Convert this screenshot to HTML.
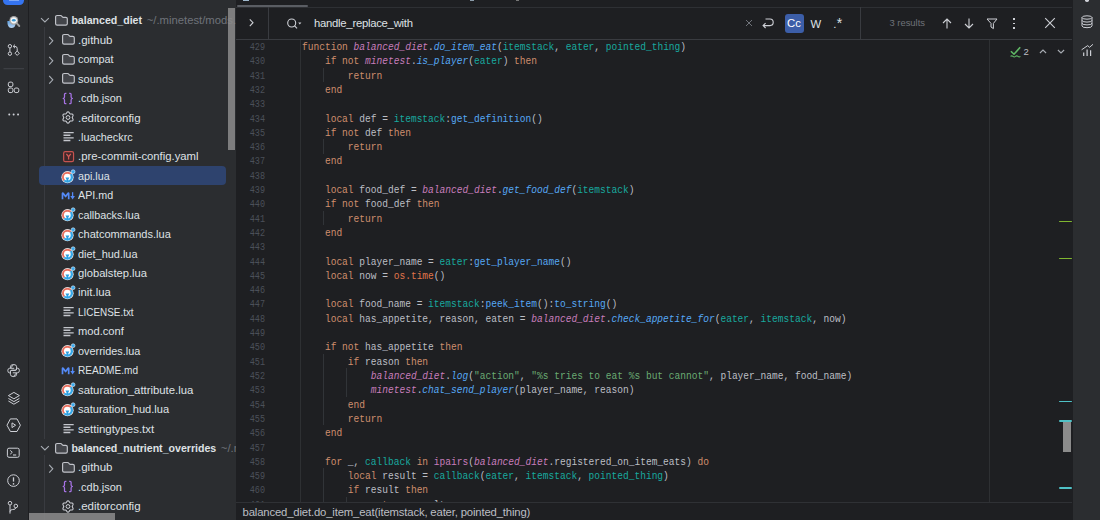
<!DOCTYPE html>
<html><head><meta charset="utf-8">
<style>
*{margin:0;padding:0;box-sizing:border-box}
html,body{width:1100px;height:520px;overflow:hidden;background:#2b2d30;font-family:"Liberation Sans",sans-serif;color:#dfe1e5}
.abs{position:absolute}
#lstrip{position:absolute;left:0;top:0;width:28px;height:520px;background:#2b2d30}
#proj{position:absolute;left:28px;top:0;width:208px;height:520px;background:#2b2d30;overflow:hidden}
#editor{position:absolute;left:236px;top:0;width:836px;height:520px;background:#1e1f22;overflow:hidden}
#rstrip{position:absolute;left:1072px;top:0;width:28px;height:520px;background:#2b2d30;border-left:1px solid #1e1f22}
.tt{font-size:11.3px;line-height:14px;white-space:nowrap;color:#dfe1e5}
.tt.b{font-weight:bold;font-size:10.6px}
.sfx{font-weight:normal;color:#6f737a;font-size:11.3px;margin-left:4.6px}
.sel{background:#2e436e;border-radius:4px}
.tguide{position:absolute;width:1px;background:#393b40}
.code{position:absolute;left:66px;font-family:"Liberation Mono",monospace;font-size:11px;line-height:14.303px;white-space:pre;color:#bcbec4;transform:scaleX(0.8682);transform-origin:0 0}
.ln{position:absolute;left:0;width:29px;text-align:right;font-family:"Liberation Mono",monospace;font-size:11px;line-height:14.303px;color:#4b5059;transform:scaleX(0.77);transform-origin:100% 0}
.guide{width:1px;background:#313438}
.k{color:#cf8e6d}.p{color:#c77dbb;font-style:italic}.f{color:#56a8f5;font-style:italic}.v{color:#18a99f}.s{color:#6aab73}.o{color:#e0764b}.fn{color:#56a8f5}.ip{color:#c77dbb}
.sbar{background:rgba(140,140,140,0.85)}
.findbar{position:absolute;left:0;top:9px;width:836px;height:31px;border-bottom:1px solid #393b40;background:#1e1f22}
.vline{position:absolute;width:1px;background:#393b40}
.ui{font-size:11.3px;white-space:nowrap;line-height:14px}
.mark{left:823px;width:12.6px;height:1.7px;border-radius:1px}

</style></head><body>
<div id="lstrip">
<div class="abs" style="left:3px;top:-6px;width:21px;height:11.4px;border-radius:4.5px;background:#3574f0"></div>
<div class="abs" style="left:8.8px;top:0px;width:10px;height:1.1px;background:#7ea8f6"></div>
<svg class="abs" style="left:0;top:0" width="28" height="520" viewBox="0 0 28 520">
 <g fill="none" stroke="#ced0d6" stroke-width="1">
  <defs><linearGradient id="bl" x1="0" y1="0" x2="0" y2="1"><stop offset="0" stop-color="#5d9fe0"/><stop offset="1" stop-color="#b9d3f0"/></linearGradient></defs>
  <path d="M7.4 21 Q7.2 27.8 11.2 27.9 Q15.4 27.9 15.4 24 L15.4 21 Z" fill="url(#bl)" stroke="none"/>
  <path d="M16.8 23.4 L19.3 26" stroke="#9c9c9c" stroke-width="1.9" stroke-linecap="round"/>
  <circle cx="13.8" cy="20.4" r="4.4" fill="#a8a8a8" stroke="none"/>
  <circle cx="13.8" cy="20.3" r="3.1" fill="#f6f6f6" stroke="none"/>
  <ellipse cx="13.8" cy="20.2" rx="1.9" ry="1.3" fill="#3a98d2" stroke="none"/>
  <circle cx="9.9" cy="46.2" r="1.7"/>
  <circle cx="9.9" cy="53.7" r="1.7"/>
  <path d="M9.9 47.9 V52"/>
  <path d="M17.2 51 L19.4 53.2 L17.2 55.4 L15 53.2 Z"/>
  <path d="M17.2 51 V48.6 Q17.2 46.4 15 46.4 H13.4 M15 44.6 L13.2 46.4 L15 48.2"/>
  <rect x="8.3" y="82.1" width="4.6" height="4.6" rx="1.7"/>
  <rect x="8.3" y="88" width="4.6" height="4.6" rx="1.7"/>
  <rect x="14.2" y="88" width="4.6" height="4.6" rx="1.7"/>
  <path d="M13.6 364.5 Q10.4 364.5 10.4 366.8 V368.3 H14.2 M10.4 368.3 H9.6 Q7.8 368.3 7.8 370.6 Q7.8 372.9 9.6 372.9 H10.4 V371.6 Q10.4 370.3 11.8 370.3 H15.2 Q16.6 370.3 16.6 368.9 V366.8 Q16.6 364.5 13.6 364.5 Z" stroke-width="0.95"/>
  <path d="M13.4 376.6 Q16.6 376.6 16.6 374.3 V372.8 H12.8 M16.6 372.8 H17.4 Q19.4 372.8 19.4 370.5 Q19.4 368.2 17.4 368.2 H16.6 V369 Q16.6 370.3 15.2 370.3 H11.8 Q10.4 370.3 10.4 371.6 V374.3 Q10.4 376.6 13.4 376.6 Z" stroke-width="0.95"/>
  <path d="M13.9 392.4 L19.4 395.6 L13.9 398.8 L8.4 395.6 Z" stroke-linejoin="round"/>
  <path d="M8.4 398.4 L13.9 401.6 L19.4 398.4"/>
  <path d="M8.4 401 L13.9 404.2 L19.4 401"/>
  <path d="M10.4 418.9 H17 L20.4 425.2 L17 431.5 H10.4 L7 425.2 Z" stroke-linejoin="round"/>
  <path d="M12 422.9 L15.6 425.2 L12 427.6 Z" stroke-linejoin="round"/>
  <rect x="7.4" y="448.2" width="11.8" height="9.1" rx="1.6"/>
  <path d="M10.2 450.4 L12.3 452.3 L10.2 454.2"/>
  <path d="M13 455 H16.2" stroke-width="1.1"/>
  <circle cx="13.5" cy="480.6" r="5.8"/>
  <path d="M13.5 477.3 V481.6" stroke-width="1.3"/>
  <circle cx="13.5" cy="483.9" r="0.8" fill="#ced0d6" stroke="none"/>
  <circle cx="10" cy="503.2" r="1.8"/>
  <circle cx="15.8" cy="506" r="1.8"/>
  <path d="M10 505 V513.6 M10 511.6 Q10 509.6 12.4 509.6 Q15.8 509.6 15.8 507.8"/>
 </g>
 <rect x="3.5" y="68.2" width="20.5" height="1" fill="#43454a"/>
 <g fill="#ced0d6"><rect x="8.3" y="113.6" width="1.9" height="1.9" rx="0.8"/><rect x="12.7" y="113.6" width="1.9" height="1.9" rx="0.8"/><rect x="17.1" y="113.6" width="1.9" height="1.9" rx="0.8"/></g>
</svg>
</div>
<div id="proj">
<div class="tguide" style="left:15.5px;top:27px;height:412px"></div>
<div class="tguide" style="left:15.5px;top:455px;height:70px"></div>
<div class="abs" style="left:11.799999999999997px;top:16.90px;line-height:0"><svg width="10" height="7" viewBox="0 0 10 7"><path d="M1 1.2 L4.9 5 L8.8 1.2" fill="none" stroke="#a8adb4" stroke-width="1.1"/></svg></div>
<div class="abs" style="left:26px;top:14.00px;line-height:0"><svg width="15" height="13" viewBox="0 0 15 13"><path d="M1.6 3 Q1.6 1.5 3.1 1.5 H6.6 Q7.3 1.5 7.8 2.2 L8.4 3 Q8.8 3.3 9.4 3.3 H11.8 Q13.3 3.3 13.3 4.8 V9.7 Q13.3 11.1 11.8 11.1 H3.1 Q1.6 11.1 1.6 9.7 Z" fill="#43454a" stroke="#c2c4ca" stroke-width="1.15" stroke-linejoin="round"/></svg></div>
<div class="abs tt b" style="left:43.400000000000006px;top:13.30px">balanced_diet<span class="sfx">~/.minetest/mods.d/balanced_diet</span></div>
<div class="abs" style="left:19.6px;top:36.44px;line-height:0"><svg width="7" height="10" viewBox="0 0 7 10"><path d="M1.2 0.9 L4.8 4.8 L1.2 8.7" fill="none" stroke="#a8adb4" stroke-width="1.1"/></svg></div>
<div class="abs" style="left:33px;top:33.44px;line-height:0"><svg width="15" height="13" viewBox="0 0 15 13"><path d="M1.6 3 Q1.6 1.5 3.1 1.5 H6.6 Q7.3 1.5 7.8 2.2 L8.4 3 Q8.8 3.3 9.4 3.3 H11.8 Q13.3 3.3 13.3 4.8 V9.7 Q13.3 11.1 11.8 11.1 H3.1 Q1.6 11.1 1.6 9.7 Z" fill="#43454a" stroke="#c2c4ca" stroke-width="1.15" stroke-linejoin="round"/></svg></div>
<div class="abs tt" style="left:50px;top:32.74px;transform:scaleX(1.0176);transform-origin:0 0">.github</div>
<div class="abs" style="left:19.6px;top:55.88px;line-height:0"><svg width="7" height="10" viewBox="0 0 7 10"><path d="M1.2 0.9 L4.8 4.8 L1.2 8.7" fill="none" stroke="#a8adb4" stroke-width="1.1"/></svg></div>
<div class="abs" style="left:33px;top:52.88px;line-height:0"><svg width="15" height="13" viewBox="0 0 15 13"><path d="M1.6 3 Q1.6 1.5 3.1 1.5 H6.6 Q7.3 1.5 7.8 2.2 L8.4 3 Q8.8 3.3 9.4 3.3 H11.8 Q13.3 3.3 13.3 4.8 V9.7 Q13.3 11.1 11.8 11.1 H3.1 Q1.6 11.1 1.6 9.7 Z" fill="#43454a" stroke="#c2c4ca" stroke-width="1.15" stroke-linejoin="round"/></svg></div>
<div class="abs tt" style="left:50px;top:52.18px;transform:scaleX(0.9579);transform-origin:0 0">compat</div>
<div class="abs" style="left:19.6px;top:75.32px;line-height:0"><svg width="7" height="10" viewBox="0 0 7 10"><path d="M1.2 0.9 L4.8 4.8 L1.2 8.7" fill="none" stroke="#a8adb4" stroke-width="1.1"/></svg></div>
<div class="abs" style="left:33px;top:72.32px;line-height:0"><svg width="15" height="13" viewBox="0 0 15 13"><path d="M1.6 3 Q1.6 1.5 3.1 1.5 H6.6 Q7.3 1.5 7.8 2.2 L8.4 3 Q8.8 3.3 9.4 3.3 H11.8 Q13.3 3.3 13.3 4.8 V9.7 Q13.3 11.1 11.8 11.1 H3.1 Q1.6 11.1 1.6 9.7 Z" fill="#43454a" stroke="#c2c4ca" stroke-width="1.15" stroke-linejoin="round"/></svg></div>
<div class="abs tt" style="left:50px;top:71.62px;transform:scaleX(0.975);transform-origin:0 0">sounds</div>
<div class="abs" style="left:34.4px;top:91.56px;line-height:0"><svg width="14" height="13" viewBox="0 0 14 13"><path d="M4.4 1.3 H3.5 Q2.5 1.3 2.5 2.3 V5 Q2.5 6.1 1.2 6.5 Q2.5 6.9 2.5 8 V10.7 Q2.5 11.7 3.5 11.7 H4.4 M7.2 1.3 H8.1 Q9.1 1.3 9.1 2.3 V5 Q9.1 6.1 10.4 6.5 Q9.1 6.9 9.1 8 V10.7 Q9.1 11.7 8.1 11.7 H7.2" fill="none" stroke="#a874e6" stroke-width="1.25" stroke-linejoin="round"/></svg></div>
<div class="abs tt" style="left:50px;top:91.06px;transform:scaleX(0.9711);transform-origin:0 0">.cdb.json</div>
<div class="abs" style="left:33.1px;top:109.90px;line-height:0"><svg width="14" height="15" viewBox="0 0 14 15"><path d="M11.20 7.50 L11.28 7.87 L11.51 8.29 L11.78 8.78 L12.00 9.32 L12.07 9.87 L11.94 10.35 L11.59 10.71 L11.08 10.92 L10.50 11.00 L9.94 11.00 L9.47 11.02 L9.10 11.14 L8.82 11.40 L8.56 11.80 L8.28 12.28 L7.92 12.74 L7.49 13.08 L7.00 13.20 L6.51 13.08 L6.08 12.74 L5.72 12.28 L5.44 11.80 L5.18 11.40 L4.90 11.14 L4.53 11.02 L4.06 11.00 L3.50 11.00 L2.92 10.92 L2.41 10.71 L2.06 10.35 L1.93 9.87 L2.00 9.32 L2.22 8.78 L2.49 8.29 L2.72 7.87 L2.80 7.50 L2.72 7.13 L2.49 6.71 L2.22 6.22 L2.00 5.68 L1.93 5.13 L2.06 4.65 L2.41 4.29 L2.92 4.08 L3.50 4.00 L4.06 4.00 L4.53 3.98 L4.90 3.86 L5.18 3.60 L5.44 3.20 L5.72 2.72 L6.08 2.26 L6.51 1.92 L7.00 1.80 L7.49 1.92 L7.92 2.26 L8.28 2.72 L8.56 3.20 L8.82 3.60 L9.10 3.86 L9.47 3.98 L9.94 4.00 L10.50 4.00 L11.08 4.08 L11.59 4.29 L11.94 4.65 L12.07 5.13 L12.00 5.68 L11.78 6.22 L11.51 6.71 L11.28 7.13 Z" fill="none" stroke="#ced0d6" stroke-width="1.05" stroke-linejoin="round"/><circle cx="7" cy="7.5" r="1.9" fill="none" stroke="#ced0d6" stroke-width="1"/></svg></div>
<div class="abs tt" style="left:50px;top:110.50px;transform:scaleX(1.0164);transform-origin:0 0">.editorconfig</div>
<div class="abs" style="left:34.5px;top:131.34px;line-height:0"><svg width="12" height="11" viewBox="0 0 12 11"><path d="M0.5 1.6 H10.7 M0.5 4.25 H7.4 M0.5 6.9 H10.7 M0.5 9.5 H7.4" stroke="#c4c6cc" stroke-width="1.35"/></svg></div>
<div class="abs tt" style="left:50px;top:129.94px;transform:scaleX(0.9561);transform-origin:0 0">.luacheckrc</div>
<div class="abs" style="left:35.2px;top:150.68px;line-height:0"><svg width="12" height="12" viewBox="0 0 12 12"><rect x="0.65" y="0.65" width="9.9" height="9.9" rx="1.6" fill="#3f282b" stroke="#c75450" stroke-width="1.2"/><path d="M3.4 2.9 L5.6 5.7 L7.8 2.9 M5.6 5.7 V8.6" fill="none" stroke="#d65b57" stroke-width="1.25"/></svg></div>
<div class="abs tt" style="left:50px;top:149.38px;transform:scaleX(1.0);transform-origin:0 0">.pre-commit-config.yaml</div>
<div class="abs sel" style="left:11px;top:166.32px;width:187px;height:19px"></div>
<div class="abs" style="left:32.8px;top:168.52px;line-height:0"><svg width="15" height="15" viewBox="0 0 15 15"><circle cx="6.5" cy="8.2" r="6.1" fill="#ececec"/><path d="M2.61 12.09 A5.5 5.5 0 0 1 10.39 4.31 L6.5 8.2 Z" fill="#e8705f"/><path d="M10.39 4.31 A5.5 5.5 0 0 1 2.61 12.09 L6.5 8.2 Z" fill="#35a7e8"/><circle cx="6.3" cy="8.1" r="3.4" fill="#fff"/><path d="M4.4 8.5 H8.4 L7.3 10.6 V12.6 H5.5 V10.6 Z" fill="#2d9fe0"/><circle cx="12.1" cy="2.7" r="1.9" fill="#3aaaf0" stroke="#e8f4fb" stroke-width="0.6"/></svg></div>
<div class="abs tt" style="left:50px;top:168.82px;transform:scaleX(0.9529);transform-origin:0 0">api.lua</div>
<div class="abs" style="left:32.9px;top:191.26px;line-height:0"><svg width="16" height="11" viewBox="0 0 16 11"><path d="M1.5 8.3 V2.6 Q1.5 1.6 2.3 2.4 L4.6 5.6 L6.9 2.4 Q7.7 1.6 7.7 2.6 V8.3" fill="none" stroke="#548af7" stroke-width="1.7" stroke-linejoin="round"/><path d="M11.6 1.2 V6.4" stroke="#548af7" stroke-width="1.3"/><path d="M9.3 4.9 L11.6 8.4 L13.9 4.9 Z" fill="#548af7"/></svg></div>
<div class="abs tt" style="left:50px;top:188.26px;transform:scaleX(0.9486);transform-origin:0 0">API.md</div>
<div class="abs" style="left:32.8px;top:207.40px;line-height:0"><svg width="15" height="15" viewBox="0 0 15 15"><circle cx="6.5" cy="8.2" r="6.1" fill="#ececec"/><path d="M2.61 12.09 A5.5 5.5 0 0 1 10.39 4.31 L6.5 8.2 Z" fill="#e8705f"/><path d="M10.39 4.31 A5.5 5.5 0 0 1 2.61 12.09 L6.5 8.2 Z" fill="#35a7e8"/><circle cx="6.3" cy="8.1" r="3.4" fill="#fff"/><path d="M4.4 8.5 H8.4 L7.3 10.6 V12.6 H5.5 V10.6 Z" fill="#2d9fe0"/><circle cx="12.1" cy="2.7" r="1.9" fill="#3aaaf0" stroke="#e8f4fb" stroke-width="0.6"/></svg></div>
<div class="abs tt" style="left:50px;top:207.70px;transform:scaleX(0.9538);transform-origin:0 0">callbacks.lua</div>
<div class="abs" style="left:32.8px;top:226.84px;line-height:0"><svg width="15" height="15" viewBox="0 0 15 15"><circle cx="6.5" cy="8.2" r="6.1" fill="#ececec"/><path d="M2.61 12.09 A5.5 5.5 0 0 1 10.39 4.31 L6.5 8.2 Z" fill="#e8705f"/><path d="M10.39 4.31 A5.5 5.5 0 0 1 2.61 12.09 L6.5 8.2 Z" fill="#35a7e8"/><circle cx="6.3" cy="8.1" r="3.4" fill="#fff"/><path d="M4.4 8.5 H8.4 L7.3 10.6 V12.6 H5.5 V10.6 Z" fill="#2d9fe0"/><circle cx="12.1" cy="2.7" r="1.9" fill="#3aaaf0" stroke="#e8f4fb" stroke-width="0.6"/></svg></div>
<div class="abs tt" style="left:50px;top:227.14px;transform:scaleX(0.9789);transform-origin:0 0">chatcommands.lua</div>
<div class="abs" style="left:32.8px;top:246.28px;line-height:0"><svg width="15" height="15" viewBox="0 0 15 15"><circle cx="6.5" cy="8.2" r="6.1" fill="#ececec"/><path d="M2.61 12.09 A5.5 5.5 0 0 1 10.39 4.31 L6.5 8.2 Z" fill="#e8705f"/><path d="M10.39 4.31 A5.5 5.5 0 0 1 2.61 12.09 L6.5 8.2 Z" fill="#35a7e8"/><circle cx="6.3" cy="8.1" r="3.4" fill="#fff"/><path d="M4.4 8.5 H8.4 L7.3 10.6 V12.6 H5.5 V10.6 Z" fill="#2d9fe0"/><circle cx="12.1" cy="2.7" r="1.9" fill="#3aaaf0" stroke="#e8f4fb" stroke-width="0.6"/></svg></div>
<div class="abs tt" style="left:50px;top:246.58px;transform:scaleX(0.9661);transform-origin:0 0">diet_hud.lua</div>
<div class="abs" style="left:32.8px;top:265.72px;line-height:0"><svg width="15" height="15" viewBox="0 0 15 15"><circle cx="6.5" cy="8.2" r="6.1" fill="#ececec"/><path d="M2.61 12.09 A5.5 5.5 0 0 1 10.39 4.31 L6.5 8.2 Z" fill="#e8705f"/><path d="M10.39 4.31 A5.5 5.5 0 0 1 2.61 12.09 L6.5 8.2 Z" fill="#35a7e8"/><circle cx="6.3" cy="8.1" r="3.4" fill="#fff"/><path d="M4.4 8.5 H8.4 L7.3 10.6 V12.6 H5.5 V10.6 Z" fill="#2d9fe0"/><circle cx="12.1" cy="2.7" r="1.9" fill="#3aaaf0" stroke="#e8f4fb" stroke-width="0.6"/></svg></div>
<div class="abs tt" style="left:50px;top:266.02px;transform:scaleX(0.99);transform-origin:0 0">globalstep.lua</div>
<div class="abs" style="left:32.8px;top:285.16px;line-height:0"><svg width="15" height="15" viewBox="0 0 15 15"><circle cx="6.5" cy="8.2" r="6.1" fill="#ececec"/><path d="M2.61 12.09 A5.5 5.5 0 0 1 10.39 4.31 L6.5 8.2 Z" fill="#e8705f"/><path d="M10.39 4.31 A5.5 5.5 0 0 1 2.61 12.09 L6.5 8.2 Z" fill="#35a7e8"/><circle cx="6.3" cy="8.1" r="3.4" fill="#fff"/><path d="M4.4 8.5 H8.4 L7.3 10.6 V12.6 H5.5 V10.6 Z" fill="#2d9fe0"/><circle cx="12.1" cy="2.7" r="1.9" fill="#3aaaf0" stroke="#e8f4fb" stroke-width="0.6"/></svg></div>
<div class="abs tt" style="left:50px;top:285.46px;transform:scaleX(1.0061);transform-origin:0 0">init.lua</div>
<div class="abs" style="left:34.5px;top:306.30px;line-height:0"><svg width="12" height="11" viewBox="0 0 12 11"><path d="M0.5 1.6 H10.7 M0.5 4.25 H7.4 M0.5 6.9 H10.7 M0.5 9.5 H7.4" stroke="#c4c6cc" stroke-width="1.35"/></svg></div>
<div class="abs tt" style="left:50px;top:304.90px;transform:scaleX(0.8766);transform-origin:0 0">LICENSE.txt</div>
<div class="abs" style="left:34.5px;top:325.74px;line-height:0"><svg width="12" height="11" viewBox="0 0 12 11"><path d="M0.5 1.6 H10.7 M0.5 4.25 H7.4 M0.5 6.9 H10.7 M0.5 9.5 H7.4" stroke="#c4c6cc" stroke-width="1.35"/></svg></div>
<div class="abs tt" style="left:50px;top:324.34px;transform:scaleX(0.9872);transform-origin:0 0">mod.conf</div>
<div class="abs" style="left:32.8px;top:343.48px;line-height:0"><svg width="15" height="15" viewBox="0 0 15 15"><circle cx="6.5" cy="8.2" r="6.1" fill="#ececec"/><path d="M2.61 12.09 A5.5 5.5 0 0 1 10.39 4.31 L6.5 8.2 Z" fill="#e8705f"/><path d="M10.39 4.31 A5.5 5.5 0 0 1 2.61 12.09 L6.5 8.2 Z" fill="#35a7e8"/><circle cx="6.3" cy="8.1" r="3.4" fill="#fff"/><path d="M4.4 8.5 H8.4 L7.3 10.6 V12.6 H5.5 V10.6 Z" fill="#2d9fe0"/><circle cx="12.1" cy="2.7" r="1.9" fill="#3aaaf0" stroke="#e8f4fb" stroke-width="0.6"/></svg></div>
<div class="abs tt" style="left:50px;top:343.78px;transform:scaleX(0.9631);transform-origin:0 0">overrides.lua</div>
<div class="abs" style="left:32.9px;top:366.22px;line-height:0"><svg width="16" height="11" viewBox="0 0 16 11"><path d="M1.5 8.3 V2.6 Q1.5 1.6 2.3 2.4 L4.6 5.6 L6.9 2.4 Q7.7 1.6 7.7 2.6 V8.3" fill="none" stroke="#548af7" stroke-width="1.7" stroke-linejoin="round"/><path d="M11.6 1.2 V6.4" stroke="#548af7" stroke-width="1.3"/><path d="M9.3 4.9 L11.6 8.4 L13.9 4.9 Z" fill="#548af7"/></svg></div>
<div class="abs tt" style="left:50px;top:363.22px;transform:scaleX(0.894);transform-origin:0 0">README.md</div>
<div class="abs" style="left:32.8px;top:382.36px;line-height:0"><svg width="15" height="15" viewBox="0 0 15 15"><circle cx="6.5" cy="8.2" r="6.1" fill="#ececec"/><path d="M2.61 12.09 A5.5 5.5 0 0 1 10.39 4.31 L6.5 8.2 Z" fill="#e8705f"/><path d="M10.39 4.31 A5.5 5.5 0 0 1 2.61 12.09 L6.5 8.2 Z" fill="#35a7e8"/><circle cx="6.3" cy="8.1" r="3.4" fill="#fff"/><path d="M4.4 8.5 H8.4 L7.3 10.6 V12.6 H5.5 V10.6 Z" fill="#2d9fe0"/><circle cx="12.1" cy="2.7" r="1.9" fill="#3aaaf0" stroke="#e8f4fb" stroke-width="0.6"/></svg></div>
<div class="abs tt" style="left:50px;top:382.66px;transform:scaleX(1.0035);transform-origin:0 0">saturation_attribute.lua</div>
<div class="abs" style="left:32.8px;top:401.80px;line-height:0"><svg width="15" height="15" viewBox="0 0 15 15"><circle cx="6.5" cy="8.2" r="6.1" fill="#ececec"/><path d="M2.61 12.09 A5.5 5.5 0 0 1 10.39 4.31 L6.5 8.2 Z" fill="#e8705f"/><path d="M10.39 4.31 A5.5 5.5 0 0 1 2.61 12.09 L6.5 8.2 Z" fill="#35a7e8"/><circle cx="6.3" cy="8.1" r="3.4" fill="#fff"/><path d="M4.4 8.5 H8.4 L7.3 10.6 V12.6 H5.5 V10.6 Z" fill="#2d9fe0"/><circle cx="12.1" cy="2.7" r="1.9" fill="#3aaaf0" stroke="#e8f4fb" stroke-width="0.6"/></svg></div>
<div class="abs tt" style="left:50px;top:402.10px;transform:scaleX(0.9796);transform-origin:0 0">saturation_hud.lua</div>
<div class="abs" style="left:34.5px;top:422.94px;line-height:0"><svg width="12" height="11" viewBox="0 0 12 11"><path d="M0.5 1.6 H10.7 M0.5 4.25 H7.4 M0.5 6.9 H10.7 M0.5 9.5 H7.4" stroke="#c4c6cc" stroke-width="1.35"/></svg></div>
<div class="abs tt" style="left:50px;top:421.54px;transform:scaleX(1.0105);transform-origin:0 0">settingtypes.txt</div>
<div class="abs" style="left:11.799999999999997px;top:444.58px;line-height:0"><svg width="10" height="7" viewBox="0 0 10 7"><path d="M1 1.2 L4.9 5 L8.8 1.2" fill="none" stroke="#a8adb4" stroke-width="1.1"/></svg></div>
<div class="abs" style="left:26px;top:441.68px;line-height:0"><svg width="15" height="13" viewBox="0 0 15 13"><path d="M1.6 3 Q1.6 1.5 3.1 1.5 H6.6 Q7.3 1.5 7.8 2.2 L8.4 3 Q8.8 3.3 9.4 3.3 H11.8 Q13.3 3.3 13.3 4.8 V9.7 Q13.3 11.1 11.8 11.1 H3.1 Q1.6 11.1 1.6 9.7 Z" fill="#43454a" stroke="#c2c4ca" stroke-width="1.15" stroke-linejoin="round"/></svg></div>
<div class="abs tt b" style="left:43.400000000000006px;top:440.98px">balanced_nutrient_overrides<span class="sfx">~/.minetest/mods/balanced_nutrient_overrides</span></div>
<div class="abs" style="left:19.6px;top:464.12px;line-height:0"><svg width="7" height="10" viewBox="0 0 7 10"><path d="M1.2 0.9 L4.8 4.8 L1.2 8.7" fill="none" stroke="#a8adb4" stroke-width="1.1"/></svg></div>
<div class="abs" style="left:33px;top:461.12px;line-height:0"><svg width="15" height="13" viewBox="0 0 15 13"><path d="M1.6 3 Q1.6 1.5 3.1 1.5 H6.6 Q7.3 1.5 7.8 2.2 L8.4 3 Q8.8 3.3 9.4 3.3 H11.8 Q13.3 3.3 13.3 4.8 V9.7 Q13.3 11.1 11.8 11.1 H3.1 Q1.6 11.1 1.6 9.7 Z" fill="#43454a" stroke="#c2c4ca" stroke-width="1.15" stroke-linejoin="round"/></svg></div>
<div class="abs tt" style="left:50px;top:460.42px;transform:scaleX(1.0176);transform-origin:0 0">.github</div>
<div class="abs" style="left:34.4px;top:480.36px;line-height:0"><svg width="14" height="13" viewBox="0 0 14 13"><path d="M4.4 1.3 H3.5 Q2.5 1.3 2.5 2.3 V5 Q2.5 6.1 1.2 6.5 Q2.5 6.9 2.5 8 V10.7 Q2.5 11.7 3.5 11.7 H4.4 M7.2 1.3 H8.1 Q9.1 1.3 9.1 2.3 V5 Q9.1 6.1 10.4 6.5 Q9.1 6.9 9.1 8 V10.7 Q9.1 11.7 8.1 11.7 H7.2" fill="none" stroke="#a874e6" stroke-width="1.25" stroke-linejoin="round"/></svg></div>
<div class="abs tt" style="left:50px;top:479.86px;transform:scaleX(0.9711);transform-origin:0 0">.cdb.json</div>
<div class="abs" style="left:33.1px;top:498.70px;line-height:0"><svg width="14" height="15" viewBox="0 0 14 15"><path d="M11.20 7.50 L11.28 7.87 L11.51 8.29 L11.78 8.78 L12.00 9.32 L12.07 9.87 L11.94 10.35 L11.59 10.71 L11.08 10.92 L10.50 11.00 L9.94 11.00 L9.47 11.02 L9.10 11.14 L8.82 11.40 L8.56 11.80 L8.28 12.28 L7.92 12.74 L7.49 13.08 L7.00 13.20 L6.51 13.08 L6.08 12.74 L5.72 12.28 L5.44 11.80 L5.18 11.40 L4.90 11.14 L4.53 11.02 L4.06 11.00 L3.50 11.00 L2.92 10.92 L2.41 10.71 L2.06 10.35 L1.93 9.87 L2.00 9.32 L2.22 8.78 L2.49 8.29 L2.72 7.87 L2.80 7.50 L2.72 7.13 L2.49 6.71 L2.22 6.22 L2.00 5.68 L1.93 5.13 L2.06 4.65 L2.41 4.29 L2.92 4.08 L3.50 4.00 L4.06 4.00 L4.53 3.98 L4.90 3.86 L5.18 3.60 L5.44 3.20 L5.72 2.72 L6.08 2.26 L6.51 1.92 L7.00 1.80 L7.49 1.92 L7.92 2.26 L8.28 2.72 L8.56 3.20 L8.82 3.60 L9.10 3.86 L9.47 3.98 L9.94 4.00 L10.50 4.00 L11.08 4.08 L11.59 4.29 L11.94 4.65 L12.07 5.13 L12.00 5.68 L11.78 6.22 L11.51 6.71 L11.28 7.13 Z" fill="none" stroke="#ced0d6" stroke-width="1.05" stroke-linejoin="round"/><circle cx="7" cy="7.5" r="1.9" fill="none" stroke="#ced0d6" stroke-width="1"/></svg></div>
<div class="abs tt" style="left:50px;top:499.30px;transform:scaleX(1.0164);transform-origin:0 0">.editorconfig</div>
<div class="abs sbar" style="left:200px;top:8px;width:7px;height:142px"></div>
<div class="abs sbar" style="left:1.3px;top:513px;width:85.6px;height:7px"></div>
</div>
<div id="editor">
<div class="abs" style="left:0;top:0;width:836px;height:8px;background:#1e1f22"></div>
<div class="abs" style="left:1px;top:5px;width:71px;height:2.3px;border-radius:1px;background:#5a5d63"></div>
<div class="abs" style="left:7px;top:0;width:6px;height:1px;background:#9fb8cc"></div><div class="abs" style="left:234px;top:0;width:4px;height:1px;background:#8a9aa8"></div><div class="abs" style="left:280px;top:0;width:3px;height:1px;background:#777"></div>
<div class="abs" style="left:0;top:7px;width:836px;height:1px;background:#2e3034"></div><div class="abs" style="left:0;top:8px;width:836px;height:1px;background:#1e1f22"></div>
<div class="findbar">
  <svg class="abs" style="left:12.3px;top:9px" width="8" height="10" viewBox="0 0 8 10"><path d="M1.8 1.3 L5 4.7 L1.8 8.1" fill="none" stroke="#ced0d6" stroke-width="1.1"/></svg>
  <div class="vline" style="left:32px;top:-2px;height:33px"></div>
  <svg class="abs" style="left:50px;top:9px" width="18" height="12" viewBox="0 0 18 12"><circle cx="5.7" cy="5" r="4" fill="none" stroke="#ced0d6" stroke-width="1.1"/><path d="M8.6 7.9 L11 10.3" stroke="#ced0d6" stroke-width="1.2"/><path d="M12.2 4.6 H15.4 L13.8 6.4 Z" fill="#ced0d6"/></svg>
  <div class="ui abs" style="left:78px;top:7px;letter-spacing:-0.26px">handle_replace_with</div>
  <svg class="abs" style="left:509px;top:10px" width="8" height="8" viewBox="0 0 8 8"><path d="M1 1 L7 7 M7 1 L1 7" stroke="#6f737a" stroke-width="1"/></svg>
  <svg class="abs" style="left:525px;top:8.2px" width="14" height="12" viewBox="0 0 14 12"><path d="M4.5 2 H9 Q12.2 2 12.2 5.3 Q12.2 8.6 9 8.6 H2.2 M4.6 6.2 L2.1 8.6 L4.6 11" fill="none" stroke="#ced0d6" stroke-width="1.1"/></svg>
  <div class="abs" style="left:549px;top:5px;width:18.6px;height:18.5px;border-radius:3px;background:#3c5ea8"></div>
  <div class="ui abs" style="left:551px;top:7.4px;color:#fff">Cc</div>
  <div class="ui abs" style="left:574.5px;top:7.5px">W</div>
  <div class="ui abs" style="left:597.2px;top:7.6px">.</div><div class="abs" style="left:600.8px;top:7.2px;font-size:14px;line-height:14px;color:#dfe1e5">*</div>
  <div class="vline" style="left:624px;top:-2px;height:33px"></div>
  <div class="ui abs" style="left:653.5px;top:7.3px;color:#6f737a;font-size:9.4px">3 results</div>
  <svg class="abs" style="left:706px;top:9px" width="10" height="11" viewBox="0 0 10 11"><path d="M5 10.5 V1 M1 5 L5 1 L9 5" fill="none" stroke="#ced0d6" stroke-width="1.1"/></svg>
  <svg class="abs" style="left:728px;top:9px" width="10" height="11" viewBox="0 0 10 11"><path d="M5 0.5 V10 M1 6 L5 10 L9 6" fill="none" stroke="#ced0d6" stroke-width="1.1"/></svg>
  <svg class="abs" style="left:750px;top:8.5px" width="12" height="12" viewBox="0 0 12 12"><path d="M1 1 H11 L7.4 5.4 V10.6 L5 9 V5.4 Z" fill="none" stroke="#ced0d6" stroke-width="1" stroke-linejoin="round"/></svg>
  <div class="abs" style="left:777.3px;top:9px;width:1.6px;height:1.6px;background:#ced0d6"></div>
  <div class="abs" style="left:777.3px;top:13.8px;width:1.6px;height:1.6px;background:#ced0d6"></div>
  <div class="abs" style="left:777.3px;top:18.2px;width:1.6px;height:1.6px;background:#ced0d6"></div>
  <svg class="abs" style="left:808px;top:8.3px" width="12" height="12" viewBox="0 0 12 12"><path d="M1.2 1.2 L10.8 10.8 M10.8 1.2 L1.2 10.8" stroke="#ced0d6" stroke-width="1.1"/></svg>
</div>
<div class="abs" style="left:64px;top:40px;width:1px;height:462px;background:#2e3033"></div>
<div class="abs" style="left:753px;top:40px;width:1px;height:462px;background:#2e3033"></div>
<svg class="abs" style="left:774px;top:46px" width="12" height="12" viewBox="0 0 12 12"><path d="M0.9 5.2 L4 8.2 L10.2 1.3" fill="none" stroke="#5fb865" stroke-width="1.6"/><path d="M0.5 10.4 Q1.8 9.2 3 10.4 Q4.2 11.6 5.5 10.4 Q6.7 9.2 8 10.4 Q9.2 11.6 10.4 10.4" fill="none" stroke="#5fb865" stroke-width="1.1"/></svg>
<div class="ui abs" style="left:787.5px;top:45px;font-size:9.5px;color:#bcbec4">2</div>
<svg class="abs" style="left:802.5px;top:49px" width="9" height="6" viewBox="0 0 9 6"><path d="M0.9 4 L4 1 L7.1 4" fill="none" stroke="#a8adb4" stroke-width="1.1"/></svg>
<svg class="abs" style="left:820.7px;top:49px" width="9" height="6" viewBox="0 0 9 6"><path d="M0.9 1 L4 4 L7.1 1" fill="none" stroke="#a8adb4" stroke-width="1.1"/></svg>
<div class="abs guide" style="left:86.9px;top:67.73px;height:14.30px"></div>
<div class="abs guide" style="left:86.9px;top:139.24px;height:14.30px"></div>
<div class="abs guide" style="left:86.9px;top:210.76px;height:14.30px"></div>
<div class="abs guide" style="left:86.9px;top:353.79px;height:71.52px"></div>
<div class="abs guide" style="left:109.6px;top:368.09px;height:28.61px"></div>
<div class="abs guide" style="left:86.9px;top:468.21px;height:42.91px"></div>
<div class="abs guide" style="left:109.6px;top:496.82px;height:14.30px"></div>
<div class="ln" style="top:40.02px">429</div>
<div class="code" style="top:40.02px"><span class="k">function </span><span class="p">balanced_diet</span>.<span class="f">do_item_eat</span>(<span class="v">itemstack</span>, <span class="v">eater</span>, <span class="v">pointed_thing</span>)</div>
<div class="ln" style="top:54.32px">430</div>
<div class="code" style="top:54.32px">    <span class="k">if not </span><span class="p">minetest</span>.<span class="f">is_player</span>(<span class="v">eater</span>) <span class="k">then</span></div>
<div class="ln" style="top:68.63px">431</div>
<div class="code" style="top:68.63px">        <span class="k">return</span></div>
<div class="ln" style="top:82.93px">432</div>
<div class="code" style="top:82.93px">    <span class="k">end</span></div>
<div class="ln" style="top:97.23px">433</div>
<div class="code" style="top:97.23px"></div>
<div class="ln" style="top:111.53px">434</div>
<div class="code" style="top:111.53px">    <span class="k">local </span>def = <span class="v">itemstack</span>:<span class="fn">get_definition</span>()</div>
<div class="ln" style="top:125.84px">435</div>
<div class="code" style="top:125.84px">    <span class="k">if not </span>def <span class="k">then</span></div>
<div class="ln" style="top:140.14px">436</div>
<div class="code" style="top:140.14px">        <span class="k">return</span></div>
<div class="ln" style="top:154.44px">437</div>
<div class="code" style="top:154.44px">    <span class="k">end</span></div>
<div class="ln" style="top:168.75px">438</div>
<div class="code" style="top:168.75px"></div>
<div class="ln" style="top:183.05px">439</div>
<div class="code" style="top:183.05px">    <span class="k">local </span>food_def = <span class="p">balanced_diet</span>.<span class="f">get_food_def</span>(<span class="v">itemstack</span>)</div>
<div class="ln" style="top:197.35px">440</div>
<div class="code" style="top:197.35px">    <span class="k">if not </span>food_def <span class="k">then</span></div>
<div class="ln" style="top:211.66px">441</div>
<div class="code" style="top:211.66px">        <span class="k">return</span></div>
<div class="ln" style="top:225.96px">442</div>
<div class="code" style="top:225.96px">    <span class="k">end</span></div>
<div class="ln" style="top:240.26px">443</div>
<div class="code" style="top:240.26px"></div>
<div class="ln" style="top:254.57px">444</div>
<div class="code" style="top:254.57px">    <span class="k">local </span>player_name = <span class="v">eater</span>:<span class="fn">get_player_name</span>()</div>
<div class="ln" style="top:268.87px">445</div>
<div class="code" style="top:268.87px">    <span class="k">local </span>now = <span class="o">os.time</span>()</div>
<div class="ln" style="top:283.17px">446</div>
<div class="code" style="top:283.17px"></div>
<div class="ln" style="top:297.47px">447</div>
<div class="code" style="top:297.47px">    <span class="k">local </span>food_name = <span class="v">itemstack</span>:<span class="fn">peek_item</span>():<span class="fn">to_string</span>()</div>
<div class="ln" style="top:311.78px">448</div>
<div class="code" style="top:311.78px">    <span class="k">local </span>has_appetite, reason, eaten = <span class="p">balanced_diet</span>.<span class="f">check_appetite_for</span>(<span class="v">eater</span>, <span class="v">itemstack</span>, now)</div>
<div class="ln" style="top:326.08px">449</div>
<div class="code" style="top:326.08px"></div>
<div class="ln" style="top:340.38px">450</div>
<div class="code" style="top:340.38px">    <span class="k">if not </span>has_appetite <span class="k">then</span></div>
<div class="ln" style="top:354.69px">451</div>
<div class="code" style="top:354.69px">        <span class="k">if </span>reason <span class="k">then</span></div>
<div class="ln" style="top:368.99px">452</div>
<div class="code" style="top:368.99px">            <span class="p">balanced_diet</span>.<span class="f">log</span>(<span class="s">&quot;action&quot;</span>, <span class="s">&quot;%s tries to eat %s but cannot&quot;</span>, player_name, food_name)</div>
<div class="ln" style="top:383.29px">453</div>
<div class="code" style="top:383.29px">            <span class="p">minetest</span>.<span class="f">chat_send_player</span>(player_name, reason)</div>
<div class="ln" style="top:397.60px">454</div>
<div class="code" style="top:397.60px">        <span class="k">end</span></div>
<div class="ln" style="top:411.90px">455</div>
<div class="code" style="top:411.90px">        <span class="k">return</span></div>
<div class="ln" style="top:426.20px">456</div>
<div class="code" style="top:426.20px">    <span class="k">end</span></div>
<div class="ln" style="top:440.50px">457</div>
<div class="code" style="top:440.50px"></div>
<div class="ln" style="top:454.81px">458</div>
<div class="code" style="top:454.81px">    <span class="k">for </span>_, <span class="v">callback</span><span class="k"> in </span><span class="ip">ipairs</span>(<span class="p">balanced_diet</span>.registered_on_item_eats) <span class="k">do</span></div>
<div class="ln" style="top:469.11px">459</div>
<div class="code" style="top:469.11px">        <span class="k">local </span>result = <span class="v">callback</span>(<span class="v">eater</span>, <span class="v">itemstack</span>, <span class="v">pointed_thing</span>)</div>
<div class="ln" style="top:483.41px">460</div>
<div class="code" style="top:483.41px">        <span class="k">if </span>result <span class="k">then</span></div>
<div class="ln" style="top:497.72px">461</div>
<div class="code" style="top:497.72px">            <span class="k">return </span>result</div>
<div class="abs mark" style="top:220.6px;background:#7fb530"></div>
<div class="abs mark" style="top:257.8px;background:#7fb530"></div>
<div class="abs mark" style="top:400.8px;background:#4fc1c6"></div>
<div class="abs mark" style="top:419.9px;background:#4fc1c6"></div>
<div class="abs mark" style="top:486.9px;background:#4fc1c6"></div>
<div class="abs" style="left:826.8px;top:422.1px;width:8.5px;height:30.3px;background:#8c8c8c"></div>
<div class="abs" style="left:0;top:502px;width:836px;height:18px;background:#1e1f22;border-top:1px solid #2f3135"></div>
<div class="ui abs" style="left:6.5px;top:504.5px;letter-spacing:-0.15px;color:#bcbec4">balanced_diet.do_item_eat(itemstack, eater, pointed_thing)</div>
</div>
<div class="abs" style="left:28px;top:0;width:1px;height:520px;background:#1e1f22"></div>
<div id="rstrip">
<svg class="abs" style="left:6.5px;top:15.4px" width="14" height="14" viewBox="0 0 14 14"><ellipse cx="7" cy="2.5" rx="5" ry="1.7" fill="none" stroke="#ced0d6" stroke-width="1"/><path d="M2 2.5 V10.9 Q2 12.7 7 12.7 Q12 12.7 12 10.9 V2.5 M2 5.3 Q2 7.1 7 7.1 Q12 7.1 12 5.3 M2 8.1 Q2 9.9 7 9.9 Q12 9.9 12 8.1" fill="none" stroke="#ced0d6" stroke-width="1"/></svg>
<svg class="abs" style="left:7px;top:43px" width="14" height="14" viewBox="0 0 14 14"><path d="M1.6 6.8 L7.7 2.6 L9.5 4.3 L13 1.3" fill="none" stroke="#ced0d6" stroke-width="1"/><path d="M3.7 9.4 V13 M7.1 6.6 V13 M10.6 7.2 V13" stroke="#ced0d6" stroke-width="1.2"/></svg>
<div class="abs" style="left:12.2px;top:-2.3px;width:3.4px;height:4.2px;border-radius:1.7px;background:#ced0d6"></div>
</div>

</body></html>
